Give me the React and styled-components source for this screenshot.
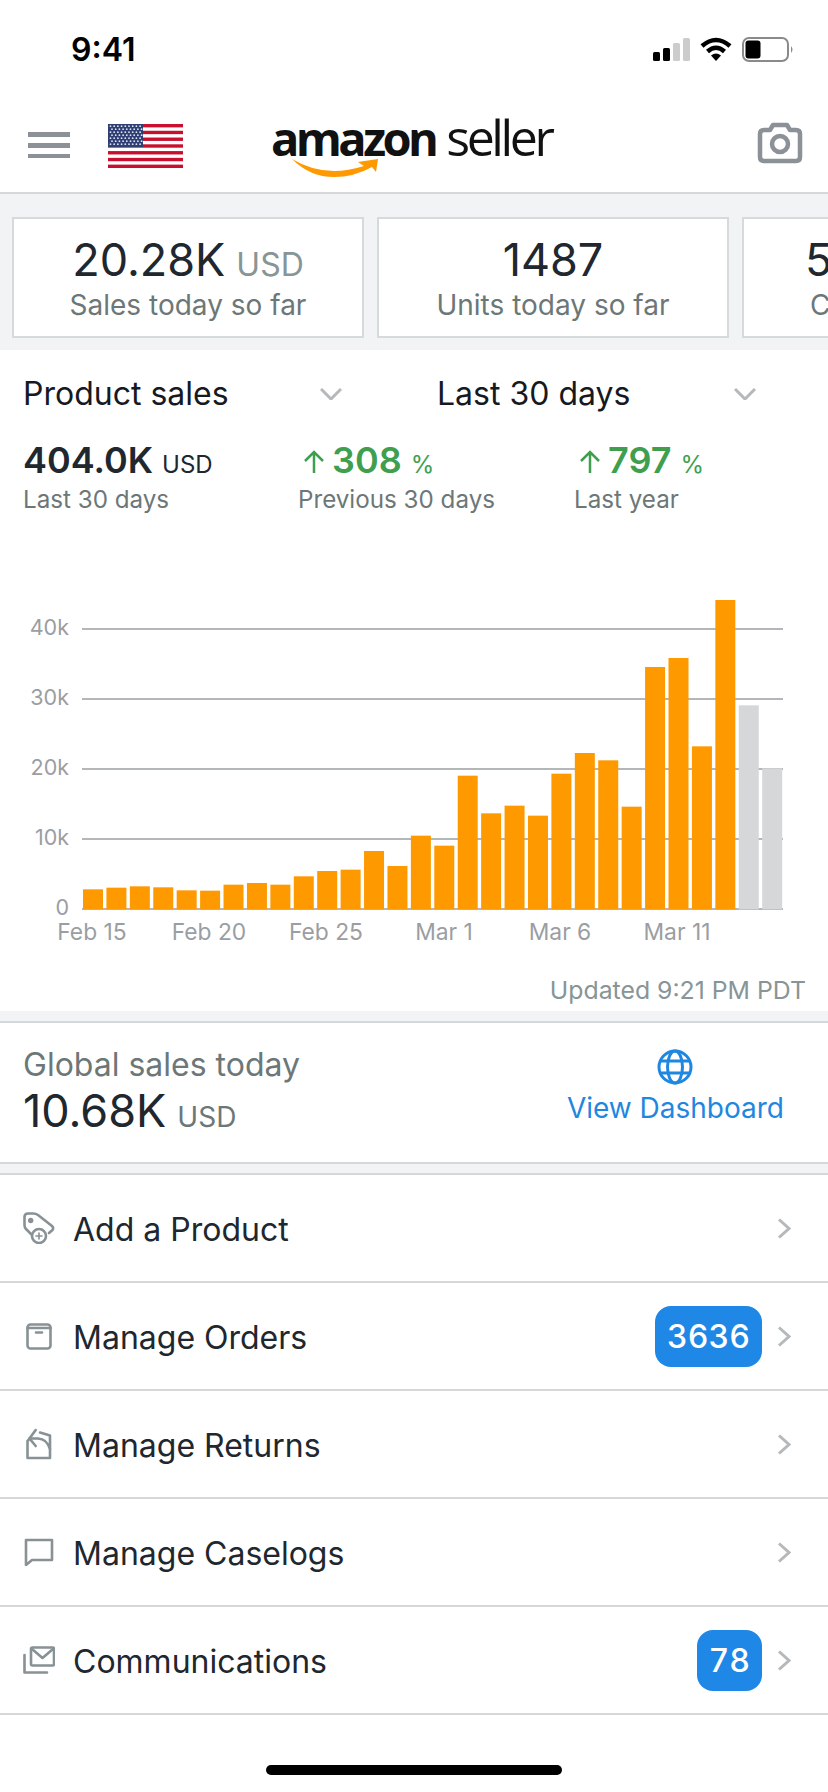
import React from "react";
import styled, { createGlobalStyle } from "styled-components";

const GlobalStyle = createGlobalStyle`
  html, body {
    margin: 0;
    padding: 0;
    background: #fff;
    font-family: Inter, "Liberation Sans", sans-serif;
  }
`;

const Page = styled.div`
  width: 828px;
  height: 1792px;
  overflow: hidden;
  background: #f1f3f5;
  color: #20272e;
`;

const StatusBar = styled.div`
  height: 96px;
  box-sizing: border-box;
  background: #fff;
  display: flex;
  justify-content: space-between;
  padding: 37px 33px 0 71px;
`;
const Time = styled.div`
  font-size: 32px;
  line-height: 26px;
  font-weight: 600;
  color: #000;
`;

const Header = styled.div`
  height: 98px;
  box-sizing: border-box;
  background: #fff;
  border-bottom: 2px solid #d5d7d9;
  display: flex;
  align-items: center;
  padding: 0 25px 0 28px;
`;
const Flag = styled.svg`
  margin-left: 38px;
  margin-top: 4px;
`;
const Logo = styled.div`
  position: relative;
  margin-left: 88px;
  margin-top: -14px;
  display: flex;
  align-items: baseline;
  gap: 11px;
  font-family: "Open Sans", sans-serif;
  color: #111;
  line-height: 60px;
`;
const LogoBold = styled.span`
  font-size: 47px;
  font-weight: 700;
  letter-spacing: -3.6px;
`;
const LogoThin = styled.span`
  font-size: 50px;
  font-weight: 400;
  letter-spacing: -3.4px;
`;
const Smile = styled.svg`
  position: absolute;
  left: 21px;
  top: 50px;
`;
const Camera = styled.svg`
  margin-left: auto;
  margin-top: -2px;
`;

const CardStrip = styled.div`
  display: flex;
  gap: 13px;
  overflow: hidden;
  padding: 23px 0 12px 12px;
`;
const Card = styled.div`
  flex: 0 0 352px;
  height: 121px;
  box-sizing: border-box;
  background: #fff;
  border: 2px solid #d5dbdb;
  display: flex;
  flex-direction: column;
  align-items: ${(p) => (p.$clipped ? "flex-start" : "center")};
  padding: 15px 0 0 ${(p) => (p.$clipped ? "61px" : "0")};
`;
const CardValue = styled.div`
  font-size: 45px;
  line-height: 52px;
  height: 52px;
  display: flex;
  align-items: baseline;
  gap: 11px;
`;
const Unit = styled.span`
  font-size: ${(p) => p.$size || 32}px;
  line-height: 1;
  color: ${(p) => p.$color || "#879596"};
  font-weight: 400;
`;
const CardLabel = styled.div`
  font-size: 28px;
  line-height: 34px;
  margin-top: 2px;
  margin-left: ${(p) => p.$indent || 0}px;
  color: #6c7778;
`;

const SalesPanel = styled.div`
  height: 661px;
  box-sizing: border-box;
  background: #fff;
  padding-top: 26px;
`;
const SelectRow = styled.div`
  display: flex;
  gap: 95px;
  padding-left: 23px;
`;
const Select = styled.div`
  width: 319px;
  display: flex;
  align-items: center;
  justify-content: space-between;
  font-size: 32px;
  line-height: 36px;
  color: #16191f;
`;
const StatRow = styled.div`
  display: grid;
  grid-template-columns: 275px 276px 1fr;
  padding-left: 23px;
  margin-top: 26px;
`;
const StatValue = styled.div`
  display: flex;
  align-items: baseline;
  height: 44px;
  line-height: 44px;
  font-size: 36px;
  font-weight: 600;
  color: ${(p) => (p.$up ? "#3f9f4f" : "#20272e")};
  padding-left: ${(p) => (p.$up ? "5px" : "0")};
`;
const UpArrow = styled.svg`
  margin-right: 7px;
  align-self: center;
  margin-top: 4px;
`;
const StatUnit = styled.span`
  font-size: 24px;
  font-weight: 400;
  margin-left: 9px;
`;
const StatLabel = styled.div`
  font-size: 24.2px;
  line-height: 30px;
  margin-top: 3px;
  color: #6c7778;
`;
const Chart = styled.svg`
  display: block;
  margin-top: 65px;
`;
const GridLine = styled.line`
  stroke: #b4b7ba;
  stroke-width: 2;
`;
const Bar = styled.rect`
  fill: ${(p) => (p.$estimate ? "#d5d7d9" : "#ff9900")};
`;
const AxisText = styled.text`
  fill: #9a9ea3;
  font-family: Inter, sans-serif;
  font-size: ${(p) => p.$size}px;
`;
const Updated = styled.div`
  margin-top: 25px;
  padding-right: 22px;
  text-align: right;
  font-size: 24.8px;
  line-height: 30px;
  color: #879596;
`;

const GlobalCard = styled.div`
  margin-top: 10px;
  height: 143px;
  box-sizing: border-box;
  background: #fff;
  border-top: 2px solid #d5d7d9;
  border-bottom: 2px solid #d5d7d9;
  display: flex;
  justify-content: space-between;
  padding: 24px 44px 0 23px;
`;
const GlobalTitle = styled.div`
  font-size: 32px;
  line-height: 36px;
  color: #6c7778;
`;
const GlobalValue = styled.div`
  display: flex;
  align-items: baseline;
  gap: 11px;
  font-size: 45px;
  line-height: 56px;
`;
const DashLink = styled.div`
  display: flex;
  flex-direction: column;
  align-items: center;
  gap: 5px;
  padding-top: 2px;
  font-size: 28px;
  line-height: 36px;
  color: #1f87e0;
`;

const MenuList = styled.div`
  margin-top: 9px;
  background: #fff;
  border-top: 2px solid #d5d7d9;
  height: 617px;
`;
const MenuRow = styled.div`
  height: 108px;
  box-sizing: border-box;
  border-bottom: 2px solid #d5d7d9;
  display: flex;
  align-items: center;
  padding: 0 37px 0 23px;
  font-size: 32px;
`;
const MenuIcon = styled.div`
  width: 32px;
  height: 32px;
  margin-right: 18px;
  display: flex;
  align-items: center;
  justify-content: center;
`;
const MenuText = styled.div`
  flex: 1;
  padding-top: 2px;
  color: #20272e;
`;
const Badge = styled.div`
  height: 61px;
  box-sizing: border-box;
  padding: 0 12px;
  margin-right: 15px;
  border-radius: 16px;
  background: #1f87e5;
  color: #fff;
  font-size: 32px;
  font-weight: 500;
  font-variant-numeric: tabular-nums;
  line-height: 61px;
`;
const HomeBar = styled.div`
  width: 296px;
  height: 10px;
  margin: 50px auto 0;
  border-radius: 5px;
  background: #000;
`;

const bars = [928, 923, 919, 922, 931, 932, 914, 909, 914, 889, 873, 869, 813, 858, 767, 797, 587, 700, 677, 707, 581, 519, 541, 680, 261, 234, 499, 60, 376, 565];
const gridTicks = [
  { y: 49, label: "40k" },
  { y: 119, label: "30k" },
  { y: 189, label: "20k" },
  { y: 259, label: "10k" },
  { y: 329, label: "0" },
];
const dates = [
  { x: 92, label: "Feb 15" },
  { x: 209, label: "Feb 20" },
  { x: 326, label: "Feb 25" },
  { x: 444, label: "Mar 1" },
  { x: 560, label: "Mar 6" },
  { x: 677, label: "Mar 11" },
];

function StatusIcons() {
  return (
    <svg width="142" height="26" viewBox="0 0 142 26">
      <rect x="0" y="15" width="7" height="9" rx="1.5" fill="#000" />
      <rect x="10" y="11" width="7" height="13" rx="1.5" fill="#000" />
      <rect x="20" y="6" width="7" height="18" rx="1.5" fill="#ccc" />
      <rect x="30" y="1" width="7" height="23" rx="1.5" fill="#ccc" />
      <g fill="none" stroke="#000" strokeWidth="4.5">
        <path d="M49 9 Q63 -3 77 9" />
        <path d="M54.5 14.5 Q63 7 71.5 14.5" />
      </g>
      <path d="M58 18.5 Q63 14.5 68 18.5 L63 24 Z" fill="#000" />
      <rect x="90" y="1" width="45" height="23" rx="6" fill="none" stroke="#8a8a8a" strokeWidth="2" />
      <rect x="92.5" y="3.5" width="15" height="18" rx="3" fill="#000" />
      <path d="M138 9 Q141 12.5 138 16 Z" fill="#8a8a8a" />
    </svg>
  );
}

function Hamburger() {
  return (
    <svg width="42" height="28" viewBox="0 0 42 28">
      <rect x="0" y="2" width="42" height="5" fill="#8b9196" />
      <rect x="0" y="13" width="42" height="5" fill="#8b9196" />
      <rect x="0" y="24" width="42" height="5" fill="#8b9196" />
    </svg>
  );
}

function UsFlag() {
  const stripes = [0, 2, 4, 6, 8, 10, 12];
  const stars = [];
  for (let r = 0; r < 7; r++) {
    for (let c = 0; c < 9; c++) {
      stars.push(<circle key={r + "-" + c} cx={2.5 + c * 3.7 + (r % 2) * 1.5} cy={2.2 + r * 3} r="0.9" fill="#dfe3ee" />);
    }
  }
  return (
    <Flag width="75" height="44" viewBox="0 0 75 44">
      <rect width="75" height="44" fill="#fff" />
      {stripes.map((s) => (
        <rect key={s} y={(s * 44) / 13} width="75" height={44 / 13} fill="#c8102e" />
      ))}
      <rect width="35" height="23" fill="#2f3f73" />
      {stars}
    </Flag>
  );
}

function Chevron({ down }) {
  return (
    <svg width={down ? 22 : 14} height={down ? 12 : 21} viewBox={down ? "0 0 22 12" : "0 0 14 21"} fill="none" stroke="#b5b9bb" strokeWidth="3">
      <path d={down ? "M1 1 L11 11 L21 1" : "M2 1.5 L12 10.5 L2 19.5"} />
    </svg>
  );
}

function Arrow() {
  return (
    <UpArrow width="22" height="24" viewBox="0 0 22 24" fill="none" stroke="#3f9f4f" strokeWidth="2.5">
      <path d="M11 23 V2 M2 11 L11 2 L20 11" />
    </UpArrow>
  );
}

function SalesChart() {
  return (
    <Chart width="828" height="370" viewBox="0 0 828 370">
      {gridTicks.map((t) => (
        <g key={t.label}>
          <GridLine x1="82" x2="783" y1={t.y} y2={t.y} />
          <AxisText $size={21.5} x="69" y={t.y + 6} textAnchor="end">
            {t.label}
          </AxisText>
        </g>
      ))}
      {bars.map((top, i) => (
        <Bar key={i} $estimate={i >= 28} x={83 + i * 23.42} y={top / 3} width="20" height={(988 - top) / 3} />
      ))}
      {dates.map((d) => (
        <AxisText $size={22.8} key={d.label} x={d.x} y="360" textAnchor="middle">
          {d.label}
        </AxisText>
      ))}
    </Chart>
  );
}

const iconStroke = { fill: "none", stroke: "#879196", strokeWidth: 2.6, strokeLinejoin: "round", strokeLinecap: "round" };

function AddIcon() {
  return (
    <svg width="32" height="32" viewBox="0 0 32 32" {...iconStroke}>
      <path d="M8 22 L3 17 Q1.5 15.5 1.5 13 V5 Q1.5 1.5 5 1.5 H10 Q13 1.5 15 3 L29 14 Q31 16 29.5 18 L26 21" />
      <circle cx="7.7" cy="8.5" r="1.4" fill="#879196" />
      <circle cx="16" cy="24" r="7" />
      <path d="M16 21 V27 M13 24 H19" strokeWidth="1.6" />
    </svg>
  );
}
function OrdersIcon() {
  return (
    <svg width="26" height="27" viewBox="0 0 26 27" {...iconStroke}>
      <rect x="1.5" y="1.5" width="23" height="24" rx="3" />
      <path d="M1.5 5 H24.5 M10 9.5 H16" />
    </svg>
  );
}
function ReturnsIcon() {
  return (
    <svg width="26" height="32" viewBox="0 0 26 32" {...iconStroke}>
      <path d="M14 4.5 L24 7.5 V30 H1.5 V13 L4 10.5" />
      <path d="M9.7 2 L3.5 10.5 L9.7 18" />
      <path d="M3.5 10.5 H12 Q21 11 24 21" />
    </svg>
  );
}
function CaseIcon() {
  return (
    <svg width="30" height="28" viewBox="0 0 30 28" {...iconStroke}>
      <path d="M2 2 H28 V22 H8 L2 27 Z" />
    </svg>
  );
}
function CommsIcon() {
  return (
    <svg width="32" height="28" viewBox="0 0 32 28" {...iconStroke}>
      <rect x="8" y="1.5" width="23" height="18" rx="1.5" />
      <path d="M9 3 L19.5 12 L30 3" />
      <path d="M1.5 9 V26.5 H24" />
    </svg>
  );
}

const menu = [
  { text: "Add a Product", icon: <AddIcon /> },
  { text: "Manage Orders", icon: <OrdersIcon />, badge: "3636" },
  { text: "Manage Returns", icon: <ReturnsIcon /> },
  { text: "Manage Caselogs", icon: <CaseIcon /> },
  { text: "Communications", icon: <CommsIcon />, badge: "78" },
];

export default function App() {
  return (
    <Page>
      <GlobalStyle />
      <StatusBar>
        <Time>9:41</Time>
        <StatusIcons />
      </StatusBar>
      <Header>
        <Hamburger />
        <UsFlag />
        <Logo>
          <LogoBold>amazon</LogoBold>
          <LogoThin>seller</LogoThin>
          <Smile width="88" height="20" viewBox="0 0 88 20">
            <path d="M0 2 Q20 14 42 14 Q56 14 72 9 L66 5 L86 2 L84 15 L80 10 Q62 20 42 20 Q18 20 0 2 Z" fill="#ff9900" />
          </Smile>
        </Logo>
        <Camera width="46" height="42" viewBox="0 0 46 42" fill="none" stroke="#8b9196" strokeWidth="4.5" strokeLinejoin="round">
          <path d="M3 12 Q3 8 7 8 H13 L16 3 H30 L33 8 H39 Q43 8 43 12 V35 Q43 39 39 39 H7 Q3 39 3 35 Z" />
          <circle cx="23" cy="22" r="8" />
        </Camera>
      </Header>
      <CardStrip>
        <Card>
          <CardValue>
            20.28K <Unit>USD</Unit>
          </CardValue>
          <CardLabel>Sales today so far</CardLabel>
        </Card>
        <Card>
          <CardValue>1487</CardValue>
          <CardLabel>Units today so far</CardLabel>
        </Card>
        <Card $clipped>
          <CardValue>5</CardValue>
          <CardLabel $indent={5}>C</CardLabel>
        </Card>
      </CardStrip>
      <SalesPanel>
        <SelectRow>
          <Select>
            Product sales <Chevron down />
          </Select>
          <Select>
            Last 30 days <Chevron down />
          </Select>
        </SelectRow>
        <StatRow>
          <div>
            <StatValue>
              404.0K<StatUnit>USD</StatUnit>
            </StatValue>
            <StatLabel>Last 30 days</StatLabel>
          </div>
          <div>
            <StatValue $up>
              <Arrow />
              308<StatUnit>%</StatUnit>
            </StatValue>
            <StatLabel>Previous 30 days</StatLabel>
          </div>
          <div>
            <StatValue $up>
              <Arrow />
              797<StatUnit>%</StatUnit>
            </StatValue>
            <StatLabel>Last year</StatLabel>
          </div>
        </StatRow>
        <SalesChart />
        <Updated>Updated 9:21 PM PDT</Updated>
      </SalesPanel>
      <GlobalCard>
        <div>
          <GlobalTitle>Global sales today</GlobalTitle>
          <GlobalValue>
            10.68K <Unit $size={28} $color="#6c7778">USD</Unit>
          </GlobalValue>
        </div>
        <DashLink>
          <svg width="36" height="36" viewBox="0 0 36 36" fill="none" stroke="#1f87e0" strokeWidth="3">
            <circle cx="18" cy="18" r="16" />
            <ellipse cx="18" cy="18" rx="7.5" ry="16" />
            <path d="M4 12 H32 M4 24 H32" />
          </svg>
          View Dashboard
        </DashLink>
      </GlobalCard>
      <MenuList>
        {menu.map((item) => (
          <MenuRow key={item.text}>
            <MenuIcon>{item.icon}</MenuIcon>
            <MenuText>{item.text}</MenuText>
            {item.badge && <Badge>{item.badge}</Badge>}
            <Chevron />
          </MenuRow>
        ))}
        <HomeBar />
      </MenuList>
    </Page>
  );
}
